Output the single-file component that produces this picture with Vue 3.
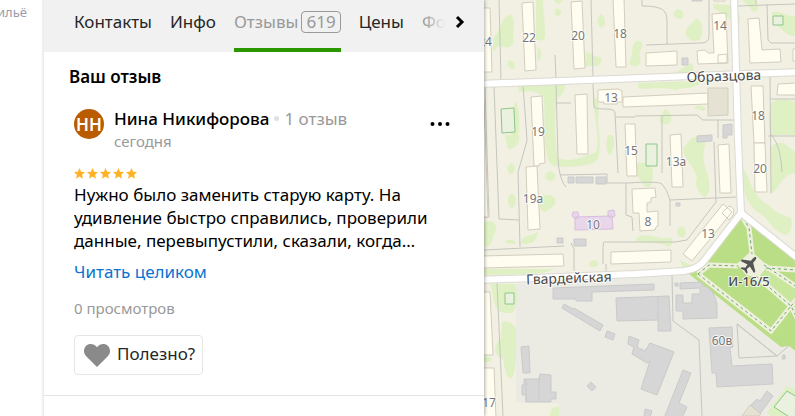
<template>
  <div class="page">
    <aside class="rail">
      <a href="#" class="rail-link">Жильё</a>
    </aside>

    <main class="panel">
      <!-- Tabs -->
      <nav class="tabs">
        <div class="tabs-list">
          <a
            v-for="tab in tabs"
            :key="tab.name"
            href="#"
            class="tab"
            :class="{ active: tab.name === activeTab }"
            @click.prevent="activeTab = tab.name"
          >
            {{ tab.name }}
            <span v-if="tab.count" class="tab-count">{{ tab.count }}</span>
          </a>
        </div>
        <button type="button" class="tabs-next" aria-label="Далее">
          <svg width="10" height="14" viewBox="0 0 10 14">
            <path d="M2 2l5 5-5 5" fill="none" stroke="#000" stroke-width="3" />
          </svg>
        </button>
      </nav>

      <!-- Own review -->
      <section class="content">
        <h2 class="title">Ваш отзыв</h2>

        <article class="review">
          <header class="author">
            <div class="avatar">НН</div>
            <div class="author-info">
              <div class="author-line">
                <span class="name">Нина Никифорова</span>
                <span class="dot"></span>
                <span class="muted">1 отзыв</span>
              </div>
              <div class="date">сегодня</div>
            </div>
            <button type="button" class="more" aria-label="Ещё">
              <svg width="20" height="6" viewBox="0 0 20 6">
                <circle cx="2.5" cy="3" r="2" />
                <circle cx="10" cy="3" r="2" />
                <circle cx="17.5" cy="3" r="2" />
              </svg>
            </button>
          </header>

          <div class="stars">
            <svg v-for="n in 5" :key="n" width="11" height="11" viewBox="0 0 11 11">
              <path d="M5.5 0l1.6 3.7 3.9.4-2.9 2.6.8 4-3.4-2.1-3.4 2.1.8-4L0 4.100l3.900-.4z" />
            </svg>
          </div>

          <p class="text">
            Нужно было заменить старую карту. На удивление быстро справились, проверили данные,
            перевыпустили, сказали, когда…
          </p>
          <a href="#" class="read-more">Читать целиком</a>
          <div class="views">0 просмотров</div>

          <button type="button" class="useful">
            <svg width="26" height="23" viewBox="0 0 26 23">
              <path
                d="M13 23L2.200 12.200C-.7 9.200-.7 4.600 2 2 5-.8 9.800-.6 13 3.200 16.200-.6 21-.8 24 2c2.700 2.600 2.700 7.200-.2 10.200z"
              />
            </svg>
            Полезно?
          </button>
        </article>
      </section>
    </main>

    <!-- Map -->
    <div class="map">
      <svg class="map-canvas" viewBox="484 0 311 416" preserveAspectRatio="xMinYMin slice">
        <rect x="484" width="311" height="416" fill="#f2f0e3" />
        <path class="yard" d="M516 284L640 276 692 272 795 350V416H559V403H516z" />

        <path v-for="d in trees" :key="d" class="tree" :d="d" />
        <path v-for="d in paths" :key="d" class="path" :d="d" />

        <path class="park" d="M741 215L797 259V352L789 346 781 347 689 274 706 264z" />
        <path class="park-light" d="M758 277l10-9 29 18v24l-6-4z" />
        <path v-for="d in alleys" :key="d" class="alley" :d="d" />
        <path class="square" d="M737 264l14-13 17 15-10 12-12-3z" />
        <path v-for="d in alleys" :key="'dash' + d" class="alley-dash" :d="d" />

        <path v-for="d in roads" :key="'casing' + d" class="road-casing" :d="d" />
        <path v-for="d in roads" :key="d" class="road" :d="d" />

        <path v-for="d in houses" :key="d" class="house" :d="d" />
        <path v-for="d in sheds" :key="d" class="shed" :d="d" />
        <path class="beige" d="M708 88h20v27l-20 1zM750 405l11 9-2 2h-17z" />
        <path class="school" d="M575 217l37-1 1 13-38 1zM573 212h5l1 5-4 2-3-3zM608 211l6-1 1 6-4 2-3-2z" />
        <path v-for="d in fields" :key="d" class="field" :d="d" />

        <!-- Plane monument -->
        <path
          class="plane"
          transform="translate(750 264) rotate(42)"
          d="M0-9c1 0 1.500 1.500 1.500 3v3L9 2v2L1.500 2 1 6l3 2v1.500L0 8.500-4 9.500V8l3-2-.5-4L-9 4V2l7.500-5v-3c0-1.500.5-3 1.500-3z"
        />

        <text
          v-for="(label, i) in numbers"
          :key="i"
          class="number"
          :x="label.x"
          :y="label.y"
        >{{ label.text }}</text>
        <text class="street" x="724" y="81" transform="rotate(-2 724 81)">Образцова</text>
        <text class="street" x="569" y="283" transform="rotate(-2 569 283)">Гвардейская</text>
        <text class="street place" x="749" y="286">И-16/5</text>
      </svg>
    </div>
  </div>
</template>

<script setup>
import { ref } from 'vue';

const activeTab = ref('Отзывы');

const tabs = [
  { name: 'Контакты' },
  { name: 'Инфо' },
  { name: 'Отзывы', count: 619 },
  { name: 'Цены' },
  { name: 'Фото' },
];

const roads = [
  'M480 84L640 78 800 72',
  'M734 -4L738 140 741 213 704 261Q698 269 684 271L635 274 480 280',
  'M741 213L800 260',
];

const alleys = [
  'M743 218l6 10 3 26',
  'M698 274l11-9 29 1',
  'M766 268l31 2',
  'M764 265l33 22',
  'M698 274l73 57 20-25',
  'M756 276l35 30 6 12',
  'M791 306l6-7',
];

const trees = [
  'M511 14c5 8 2 20 2 30-4 6-10 2-15 2-5 9-6 6-4-10 6-2 7-20 17-22z',
  'M536 0h7c0 15 3 25 2 38-3 4-7 2-9 2z',
  'M537 47c6 2 6 12 0 14z',
  'M508 61c6-2 8 4 6 8-5 0-7-3-6-8z',
  'M554 0h8c-1 5-6 5-8 0zM557 8c6 2 5 9 0 8-3-2-3-6 0-8z',
  'M601 14c6 4 5 12 0 14-5-4-5-10 0-14z',
  'M586 52c5 1 8 5 14 5 4 6-2 10-6 9h-9z',
  'M636 41c8-2 8 6 4 10-2 4 3 8-1 14-6 3-10 1-9-5 4-6 0-14 6-19z',
  'M678 9c7 1 7 11 1 10-7-2-7-8-1-10zM696 19c8 0 8 16 3 21-9 4-16-5-12-12z',
  'M713 4l16 1c12 2 13 15 9 22l-10-9-14-10z',
  'M742 0h12c8 5 3 12 0 12zM772 12c10-2 15 5 23 4v20c-10 0-13-8-22-14z',
  'M638 83l62-2c1 8-18 6-24 9-20-4-27 1-38-2zM660 75c14 1 21-6 31-12 6 8 2 13-8 13z',
  'M518 85l47-1c0 8-5 15-8 13-3 18-2 50 1 61 13 5 25-1 38-6 5-14-3-40-3-54 7-2 6 14 5 26 3 20 3 34-4 39-14 3-28 6-42 2-9-4-7-44-8-68-8-7-17-6-25-5z',
  'M516 101c5 14 5 35-2 44-6-10-4-32 2-44zM505 135h14c2 8-4 14-11 14z',
  'M511 163c7 3 3 13-1 11-4-4-3-8 1-11zM512 193c7 5 3 16-1 15-5-5-4-12 1-15zM550 171c8 2 7 11-1 10-6-3-4-9 1-10zM541 196c10-3 16 0 14 9-7 4-8 8-13 6-3-5-2-9-1-15z',
  'M484 222c14-4 14 8 9 14 0 8-5 12-9 10zM505 243c0-5 13-4 10 1zM520 244c3-10 12-7 18-13-1 10-5 14-18 13z',
  'M594 260c7 1 4 8-3 7-4-3-1-6 3-7zM636 238c11-8 25 4 35-1 4 6-1 11-4 9-10-5-20-1-31-5z',
  'M679 227c6-2 9 6 5 10-6 2-9-6-5-10zM608 135c9-3 7 15 2 20-5-3-4-15-2-20z',
  'M693 137h12c2 10-4 15 0 30 4 10 8 24 0 31-6-5-12-13-8-20-3-13-14-19-14-30z',
  'M665 109c7 2 8 12 4 15-8 1-12-2-8-9zM694 108c2-5 15-2 10 3z',
  'M742 166c8 10 9 30 25 38 8 7 12 10 24 14 3 12-4 20-8 16-13-4-15-18-26-22-10-9-16-22-15-46z',
  'M772 102c9-5 17-3 23 0v34c-10-2-18-1-25 0-2-15-2-25 2-34zM770 148c12-12 18 0 25 4v22c-12-2-16 16-24 20z',
  'M490 284h25c4 12 1 25-2 29-9 0-14 0-16-4-5-8-3-17-7-25zM502 322c7-2 15 2 14 12 0 16 1 34-4 44-7 1-7-11-9-19-13-6-7-15-2-21z',
  'M484 357c7-1 10 1 6 5h-6zM550 416c0-8 4-10 9-9v9zM484 269h70c-10 6-30 5-70 6z',
  'M680 260l11 5 4 7-12-2zM767 412l20-26 8 4v26h-25z',
  'M635 165c4-4 12-3 18 5 0 20-5 21-12 12-4-6-6-10-6-17z',
];

const paths = [
  'M499 0l2 80M555 55l1 24M591 0l2 77M494 86l5 133 20 1M523 85l4 55q-3 12-9 32l2 75M556 84l2 75q1 20 8 28M557 103h14',
  'M593 83l1 24q1 2 12 2 9 0 9 4l3 60M615 117h20M560 175l47-1v9h20q32-2 35 1 5 5 8 16l67-3M626 183v32l6 2 1 14',
  'M642 0v6q12 0 17 2 8 2 8 12v24M646 45l54-2q9 0 9-6V0M737 6l58-2M756 0v4M767 4l1 36 3 3h24',
  'M770 77l1 116M635 116l62-1 6 5h32M718 120v18M662 116v57M714 142l2 60-29 38-12 2-71 0q-1 0-1 10v12',
  'M484 250l80-4M571 243l3 6v22M484 217h5l-4-130M670 200v26M771 99h24M768 136h27M771 134q10 12 11 38M497 283l6 133M672 275l1 46 26 19 3 76M737 324l2 34 38-2zM737 324l40 32 13-11M606 264v9',
];

const houses = [
  'M482 8h8l2 64h-10z',
  'M522 3l11-1 3 68-11 1z',
  'M571 2l11-1 3 67-11 1z',
  'M613-2h11l2 69h-10z',
  'M598 90l20-1 4 2v11h-5v2h-13v-2h-6z',
  'M623 97l85-4v11l-85 3z',
  'M531 97l11-1 3 67-6 1v2h-5z',
  'M575 95l12-1 1 60h-11z',
  'M625 124h10l2 52h-10z',
  'M526 167l11-1 3 63-12 1z',
  'M712 14l14-1 2 50-30 1-1-13 8-1 3 3h6zM718 55l9-1v9h-9zM714-2h11v3h-11z',
  'M646 53l31-2v14l-31 1z',
  'M748 19l11-1 3 32 18-1 1 13-31 1z',
  'M793 49h5v12h-5z',
  'M751 86h12l2 57h-11z',
  'M754 143h11l2 49h-12z',
  'M778 84l19-1v12h-20z',
  'M670 135l11-1 2 53h-11z',
  'M718 145l11-1 2 49h-11z',
  'M632 189l23-1 1 9-5 1v4l-4 1v9l11-1v15l-2 1-1 3-15 1-1-18h-6z',
  'M729 206q7 2 4 9l-4 5-7-7zM723 204l9 8-40 49-9-7z',
  'M611 252l60-2v12l-60 2z',
  'M482 256l81-2 1 12-82 2z',
  'M482 100h2l4 117h-6z',
  'M482 292h8l3 63h-11zM482 368h12l2 50h-14z',
];

const sheds = [
  'M553 288l101-4v6l-62 2v9h-16v-2h-23z',
  'M564 304l9 5 1-1 29 17-3 6-38-23z',
  'M607 331l8 3-2 6-8-3z',
  'M616 298l53-2 2 35h-13v-11l-41 1zM658 297v23',
  'M629 336l10 4-2 7 8 4 5-8 24 9-17 43-16-6 9-28-3 2-15-9 2-7-6-3z',
  'M683 370l8 3-12 30 8 4-5 11h-18z',
  'M645 409l7 2-2 6h-6z',
  'M591 382l5 5-4 4-5-5z',
  'M521 347l8-1 1 27h-7z',
  'M524 379h15l1-5 11 1v17h5v7h-5v3h-25v-7h-4v-10h2zM526 379v23M539 378v24',
  'M680 283l22-1v4l5 1q8 5 10 18v13l-34 1v-8h-7v-16h7v8h9v-9h8v-6l-20 1z',
  'M709 328l23-1 1 20-3 1 2 18 40-2 1 20-56 3-1-14h-4z',
  'M751 405l6-6 3 2 2-3 5-7 6 5-13 18z',
  'M692-2h10v3h-10zM682 58h6v7h-6zM697 136l15-1v6l-15 1zM723 125l9-1v11h-5v3h-4z',
  'M568 177h6v6h-6zM576 177h17v6h-17zM596 177h10v7h-10zM557 238h6v5h-6zM574 239h12v7h-12zM676 203h4v3h-4zM675 283h3v3h-3zM783 355h2v4h-3z',
];

const fields = [
  'M501 109l13-1 1 24-13 1z',
  'M773 16h10v9h-10z',
  'M646 144h11v22h-11z',
  'M505 293h9v11h-9z',
  'M774 407l13-16 10 6v18l-6 3z',
];

const numbers = [
  { text: '24', x: 485, y: 46 },
  { text: '22', x: 529, y: 42 },
  { text: '20', x: 578, y: 40 },
  { text: '18', x: 620, y: 38 },
  { text: '14', x: 720, y: 30 },
  { text: '13', x: 611, y: 102 },
  { text: '19', x: 538, y: 136 },
  { text: '18', x: 758, y: 120 },
  { text: '15', x: 631, y: 155 },
  { text: '13а', x: 676, y: 166 },
  { text: '20', x: 760, y: 173 },
  { text: '19а', x: 533, y: 203 },
  { text: '8', x: 648, y: 226 },
  { text: '10', x: 593, y: 229 },
  { text: '13', x: 708, y: 238 },
  { text: '60в', x: 722, y: 345 },
  { text: '17', x: 489, y: 407 },
];
</script>

<style scoped>
.page {
  display: grid;
  grid-template-columns: 43px 441px 1fr;
  min-height: 100vh;
  background: #fff;
  font-family: 'Noto Sans', 'Open Sans', sans-serif;
  font-size: 17px;
  line-height: 23px;
  color: #000;
}

a {
  text-decoration: none;
}

button {
  font: inherit;
  cursor: pointer;
}

/* Left rail, its link is cut by the window edge */
.rail {
  display: flex;
  justify-content: flex-end;
  align-items: flex-start;
  box-sizing: border-box;
  padding: 3px 16px 0 0;
  overflow: hidden;
}

.rail-link {
  font-size: 13px;
  line-height: 18px;
  color: #999cab;
}

.panel {
  position: relative;
  z-index: 1;
  border-left: 1px solid #ebebeb;
  box-shadow: 1px 0 3px rgba(0, 0, 0, 0.3);
  background: #fff;
}

/* Tabs */
.tabs {
  position: relative;
  height: 52px;
  background: #f1f1f1;
}

.tabs-list {
  display: flex;
  gap: 18px;
  height: 100%;
  padding-left: 30px;
  overflow: hidden;
}

.tab {
  display: flex;
  align-items: center;
  gap: 3px;
  box-sizing: border-box;
  height: 52px;
  padding-bottom: 5px;
  border-bottom: 4px solid transparent;
  color: #262626;
}

.tab.active {
  border-bottom-color: #2a9600;
  color: #999;
}

.tab-count {
  padding: 0 4px;
  border: 1px solid #999;
  border-radius: 4px;
  line-height: 20px;
}

.tabs-next {
  position: absolute;
  top: 0;
  right: 0;
  display: flex;
  justify-content: flex-end;
  align-items: center;
  width: 64px;
  height: 52px;
  padding: 0 19px 8px 0;
  border: 0;
  background: linear-gradient(to right, rgba(241, 241, 241, 0.5), #f1f1f1 40%);
}

/* Review */
.title {
  margin: 0;
  padding: 13px 25px 0;
  font-size: 17px;
  font-weight: 600;
  line-height: 24px;
}

.review {
  padding: 18px 30px 20px;
  border-bottom: 1px solid #e5e5e5;
}

.author {
  display: flex;
  gap: 10px;
}

.avatar {
  display: flex;
  align-items: center;
  justify-content: center;
  width: 30px;
  height: 30px;
  margin-top: 2px;
  border-radius: 50%;
  background: #b95c00;
  color: #fff;
  font-weight: 600;
}

.author-info {
  flex: 1;
}

.author-line {
  display: flex;
  align-items: center;
  gap: 5px;
}

.name {
  font-weight: 500;
}

.dot {
  width: 5px;
  height: 5px;
  border-radius: 50%;
  background: #e0e0e0;
}

.muted {
  color: #999;
}

.date {
  font-size: 15px;
  line-height: 22px;
  color: #999;
}

.more {
  display: flex;
  align-items: center;
  height: 34px;
  padding: 0 4px;
  border: 0;
  background: none;
}

.stars {
  display: flex;
  gap: 2px;
  margin-top: 16px;
  fill: #ffb224;
}

.stars svg {
  display: block;
}

.text {
  margin: 4px 0 0;
}

.read-more {
  display: block;
  margin-top: 8px;
  color: #0a73cf;
}

.views {
  margin-top: 14px;
  font-size: 15px;
  color: #999;
}

.useful {
  display: flex;
  align-items: center;
  gap: 7px;
  height: 40px;
  margin-top: 15px;
  padding: 0 7px 4px 9px;
  border: 1px solid #e5e5e5;
  border-radius: 4px;
  background: #fff;
  color: #262626;
}

.useful svg {
  margin-top: 4px;
  fill: #8a8a8a;
}

/* Map */
.map {
  position: relative;
  overflow: hidden;
  background: #f2f0e3;
}

.map-canvas {
  display: block;
  width: 100%;
  height: 100%;
}

.yard {
  fill: #ebebe3;
}

.tree {
  fill: #dff0c4;
}

.path {
  fill: none;
  stroke: #c6c6c0;
  stroke-width: 1;
}

.park {
  fill: #bade85;
}

.park-light {
  fill: #c9e69d;
}

.square {
  fill: #eef0dd;
}

.alley {
  fill: none;
  stroke: #eef0dd;
  stroke-width: 5;
}

.alley-dash {
  fill: none;
  stroke: #6aa86a;
  stroke-width: 1;
  stroke-dasharray: 3 3;
}

.road-casing {
  fill: none;
  stroke: #dcdad2;
  stroke-width: 8;
}

.road {
  fill: none;
  stroke: #fff;
  stroke-width: 6;
}

.house {
  fill: #fffdf0;
  stroke: #d3cdbd;
}

.shed {
  fill: #d6d6d6;
  stroke: #cacaca;
}

.beige {
  fill: #e6e2d3;
  stroke: #d3cdbd;
}

.school {
  fill: #e8d7ea;
  stroke: #d8bedd;
}

.field {
  fill: #eaf1de;
  stroke: #8cc68a;
}

.plane {
  fill: #555;
}

.number,
.street {
  font-family: 'Noto Sans', sans-serif;
  text-anchor: middle;
  paint-order: stroke;
  stroke: rgba(255, 255, 255, 0.8);
  stroke-width: 2px;
}

.number {
  font-size: 12px;
  fill: #777;
}

.street {
  font-size: 14px;
  fill: #4a4a4a;
}

.place {
  font-size: 13px;
  font-weight: 500;
}
</style>

<style>
body {
  margin: 0;
}
</style>
